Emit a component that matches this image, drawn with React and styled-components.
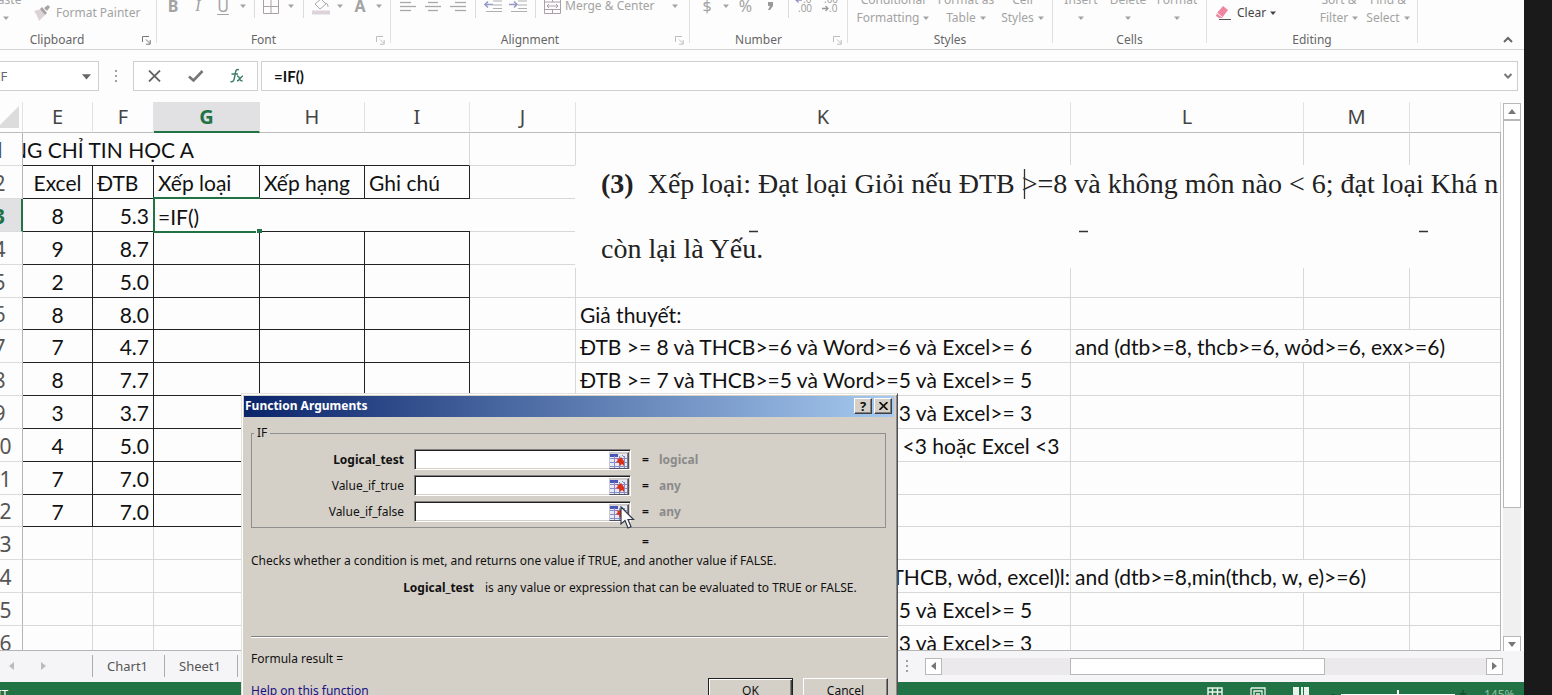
import React from "react";
import styled, { createGlobalStyle, css } from "styled-components";

const ui = '"Noto Sans", "Open Sans", sans-serif';
const cellFont = 'Lato, "Open Sans", sans-serif';

const Global = createGlobalStyle`
  *, *::before, *::after { box-sizing: border-box; }
  body { margin: 0; background: #1a1a1a; font-family: ${ui}; overflow: hidden; }
  button, input { font: inherit; color: inherit; margin: 0; padding: 0; border: 0; background: none; border-radius: 0; outline: none; }
  svg { display: block; flex: none; }
`;

const Screen = styled.div`
  display: flex;
  height: 100vh;
  overflow: hidden;
  padding-right: 28px;
  background: #1a1a1a;
`;

const Workbook = styled.main`
  position: relative;
  flex: 1;
  min-width: 0;
  display: flex;
  flex-direction: column;
  overflow: hidden;
  background: #fdfdfd;
`;

/* Ribbon */
const Ribbon = styled.div`
  display: flex;
  flex: none;
  height: 50px;
  overflow: hidden;
  border-bottom: 1px solid #d4d4d4;
  font-size: 12px;
  color: #a3a3a3;
`;

const GroupBox = styled.section`
  flex: none;
  width: ${(p) => p.$w}px;
  margin-left: ${(p) => (p.$cut ? -22 : 0)}px;
  height: 43px;
  display: flex;
  flex-direction: column;
  justify-content: flex-end;
  border-right: 1px solid #e0e0e0;
`;

const Tools = styled.div`
  display: flex;
  align-items: flex-end;
  flex: none;
  height: 54px;
  padding: 0 0 ${(p) => p.$bottom}px ${(p) => p.$left}px;
`;

const GroupFoot = styled.div`
  display: flex;
  align-items: center;
  flex: none;
  height: 18px;
  margin-bottom: -6px;
  color: #666;
`;

const GroupName = styled.span`
  flex: 1;
  text-align: center;
  line-height: 18px;
`;

const Launcher = styled.button`
  display: flex;
  width: 20px;
  justify-content: center;
  color: ${(p) => (p.$dim ? "#bdbdbd" : "#777")};
`;

const Tool = styled.button`
  display: flex;
  align-items: center;
  justify-content: ${(p) => (p.$start ? "flex-start" : "center")};
  gap: 4px;
  flex: none;
  width: ${(p) => p.$w}px;
  height: ${(p) => p.$h || 18}px;
  line-height: 18px;
  white-space: nowrap;
  color: ${(p) => (p.$dark ? "#444" : "inherit")};
  ${(p) => p.$spread && css`padding-right: 6px; & > svg:last-child { margin-left: auto; }`}
`;

const Glyph = styled.span`
  font-size: 16px;
  font-weight: ${(p) => (p.$bold ? 700 : 400)};
  font-style: ${(p) => (p.$italic ? "italic" : "normal")};
  font-family: ${(p) => (p.$italic ? '"Liberation Serif", serif' : ui)};
  text-decoration: ${(p) => (p.$under ? "underline" : "none")};
  text-underline-offset: 2px;
`;

const StackTool = styled.button`
  display: flex;
  flex-direction: column;
  align-items: center;
  flex: none;
  width: ${(p) => p.$w}px;
  line-height: 18px;
  white-space: nowrap;
`;

const StackLine = styled.span`
  display: flex;
  align-items: center;
  gap: 4px;
  height: 18px;
`;

const Divider = styled.span`
  flex: none;
  width: ${(p) => p.$w}px;
  height: 22px;
  margin-bottom: -3px;
  background: linear-gradient(#dcdcdc, #dcdcdc) center / 1px 100% no-repeat;
`;

const Collapse = styled.button`
  margin: 34px 10px 0 auto;
  width: 12px;
  height: 12px;
  color: #666;
`;

const Caret = ({ size = 6, color = "currentColor" }) => (
  <svg width={size} height={size} viewBox="0 0 6 6"><path d="M0 1.5h6L3 5z" fill={color} /></svg>
);

const LaunchIcon = () => (
  <svg width="9" height="9" viewBox="0 0 9 9" fill="none" stroke="currentColor">
    <path d="M.5 6V.5H7M4 3.500L8 7.500M8.200 4v4.200H4" />
  </svg>
);

const Group = ({ name, w, left = 4, bottom = 4, launcher, dim = true, cut, children }) => (
  <GroupBox $w={w} $cut={cut}>
    <Tools $left={left} $bottom={bottom}>{children}</Tools>
    <GroupFoot>
      <GroupName>{name}</GroupName>
      {launcher && <Launcher $dim={dim} aria-label={`${name} settings`}><LaunchIcon /></Launcher>}
    </GroupFoot>
  </GroupBox>
);

const Lines = ({ rows }) => (
  <svg width="16" height="14" viewBox="0 0 16 14" stroke="#a8a8a8" strokeWidth="1.300">
    {rows.map(([a, b], i) => <path key={i} d={`M${a} ${3.5 + i * 4}H${b}`} />)}
  </svg>
);

const IndentIcon = ({ left }) => (
  <svg width="18" height="14" viewBox="0 0 18 14" fill="none" stroke="#b0b0b0" strokeWidth="1.200">
    <path d="M9 2h9M9 6h9M9 9.500h9M2 12.500h16" />
    <path d={left ? "M9 5.500H1M4 2.500L1 5.500l3 3" : "M0 5.500h8M5 2.500l3 3-3 3"} stroke="#9a9ac8" strokeWidth="1.600" />
  </svg>
);

const DecimalIcon = ({ add }) => (
  <svg width="20" height="22" viewBox="0 0 20 22" fontSize="10" fill="#999" fontFamily="Open Sans" overflow="visible">
    <text x={add ? 9 : 4} y="8">{add ? ".0" : ".00"}</text>
    <text x={add ? 4 : 9} y="17">{add ? ".00" : ".0"}</text>
    <path d={add ? "M8 5H2M4.500 2.500L2 5l2.500 2.500" : "M2 13.500h6M5.500 11L8 13.500 5.500 16"} fill="none" stroke={add ? "#8f8fc4" : "#999"} strokeWidth="1.300" />
  </svg>
);

/* Formula bar */
const FormulaRow = styled.div`
  display: flex;
  flex: none;
  height: 52px;
  padding: 11px 6px 11px 0;
`;

const Box = styled.div`
  display: flex;
  align-items: center;
  border: 1px solid #cfcfcf;
  background: #fff;
`;

const NameBox = styled(Box)`
  width: 99px;
  border-left: 0;
  overflow: hidden;
  color: #666;
  font-size: 13px;
  input { width: 86px; margin-left: -4px; }
`;

const Grip = styled.span`
  width: ${(p) => p.$w}px;
  display: flex;
  align-items: center;
  justify-content: center;
`;

const FormulaButtons = styled(Box)`
  width: 125px;
  margin-right: 3px;
  button { width: 41px; display: flex; justify-content: center; }
`;

const FormulaBox = styled(Box)`
  flex: 1;
  padding: 0 4px 0 12px;
  font: 700 15px ${cellFont};
  color: #111;
  input { flex: 1; min-width: 0; }
  button { color: #777; }
`;

const Dots = () => (
  <svg width="3" height="14" viewBox="0 0 3 14" fill="#a0a0a0"><path d="M0 1h2v2H0zM0 6h2v2H0zM0 11h2v2H0z" /></svg>
);

/* Sheet */
const SheetArea = styled.div`
  display: flex;
  flex: 1;
  min-height: 0;
`;

const Viewport = styled.div`
  position: relative;
  flex: 1;
  min-width: 0;
  overflow: hidden;
  border-bottom: 1px solid #b5b5b5;
`;

const Grid = styled.table`
  width: calc(100% + 23px);
  margin-left: -23px;
  table-layout: fixed;
  border-collapse: separate;
  border-spacing: 0;
  font: 21px ${cellFont};
  color: #111;
`;

const ColHead = styled.th`
  height: 31px;
  padding: 0;
  font: ${(p) => (p.$on ? 700 : 400)} 20px/28px ${ui};
  color: ${(p) => (p.$on ? "#217346" : "#444")};
  background: ${(p) => (p.$on ? "#e1e1e3" : "transparent")};
  border-right: 1px solid #e2e2e2;
  border-bottom: ${(p) => (p.$on ? "2px solid #217346" : "1px solid #bcbcbc")};
  svg { margin: 0 3px 0 auto; }
`;

const RowHead = styled.th`
  height: ${(p) => (p.$r % 6 === 0 ? 32 : 33)}px;
  padding: 1px 0 0;
  font: ${(p) => (p.$on ? 700 : 400)} 21px/30px ${ui};
  color: ${(p) => (p.$on ? "#217346" : "#555")};
  background: ${(p) => (p.$on ? "#e1e1e3" : "transparent")};
  border-right: ${(p) => (p.$on ? "2px solid #217346" : "1px solid #b5b5b5")};
  border-bottom: 1px solid #dcdcdc;
`;

const Cell = styled.td`
  padding: 2px 4px 0;
  line-height: 28px;
  white-space: nowrap;
  overflow: hidden;
  text-align: ${(p) => p.$align || "left"};
  border-right: 1px solid #d8d8d8;
  border-bottom: 1px solid #d8d8d8;
  ${(p) => p.$inked && css`border-color: #222;`}
  ${(p) => p.$title && css`border-bottom-color: #222; text-indent: -16px;`}
  ${(p) => p.$flush && css`padding: 2px 0 0;`}
`;

const EditCell = styled.td`
  position: relative;
  padding: 2px 4px 0;
  border-bottom: 1px solid #222;
  input { display: block; width: 100%; height: 28px; }
  &::before {
    content: "";
    position: absolute;
    left: -1px;
    top: -2px;
    width: 107px;
    height: 36px;
    border: 2px solid #217346;
    border-right: 0;
    pointer-events: none;
  }
  &::after {
    content: "";
    position: absolute;
    left: 102px;
    bottom: -2px;
    width: 6px;
    height: 4px;
    background: #217346;
    border-left: 1px solid #fff;
  }
`;

const Snippet = styled.div`
  position: absolute;
  left: 575px;
  right: 1px;
  top: 63px;
  height: 103px;
  padding-left: 26px;
  overflow: hidden;
  background: #fdfdfd;
  font: 28px "Liberation Serif", serif;
  color: #222;
  p { margin: 0; line-height: 65px; height: 65px; white-space: pre; }
  p:first-child { margin-top: -14px; }
  svg { position: absolute; left: 0; top: 0; }
`;

const RightEdge = styled.div`
  position: absolute;
  right: 0;
  top: 30px;
  bottom: 0;
  width: 1px;
  background: #b5b5b5;
`;

const VScroll = styled.div`
  flex: none;
  display: flex;
  flex-direction: column;
  width: 18px;
  margin: 1px 3px -2px 2px;
  background: #f0f0f0;
`;

const ScrollButton = styled.button`
  display: flex;
  align-items: center;
  justify-content: center;
  flex: none;
  width: ${(p) => (p.$flat ? 17 : 18)}px;
  height: 17px;
  border: 1px solid #b8b8b8;
  background: #fff;
  color: #777;
`;

const VThumb = styled.div`
  flex: 0 1 388px;
  border: 1px solid #b8b8b8;
  background: #fff;
`;

const Spacer = styled.div`
  flex: ${(p) => p.$grow || 1};
`;

/* Tab strip and status bar */
const TabStrip = styled.div`
  display: flex;
  align-items: center;
  flex: none;
  height: 31px;
  padding: 0 21px 1px 0;
  background: #f5f5f7;
  font-size: 13px;
  color: #555;
`;

const TabNav = styled.nav`
  display: flex;
  gap: 24px;
  width: 92px;
  padding-left: 7px;
  color: #bbb;
  button { width: 8px; height: 22px; display: flex; align-items: center; justify-content: center; }
`;

const Tab = styled.button`
  width: ${(p) => p.$w}px;
  height: 22px;
  padding-right: 2px;
  border-left: 1px solid #ababab;
  line-height: 20px;
`;

const HScroll = styled.div`
  display: flex;
  width: 578px;
  height: 17px;
  background: #ebe9eb;
`;

const HThumb = styled.div`
  width: 255px;
  border: 1px solid #b8b8b8;
  background: #fff;
`;

const StatusBar = styled.footer`
  flex: none;
  height: 13px;
  overflow: hidden;
  background: #217346;
  color: #cfe3d7;
`;

const StatusItems = styled.div`
  display: flex;
  align-items: center;
  height: 24px;
  padding-right: 6px;
  font-size: 12px;
`;

const Mode = styled.span`
  margin: 0 auto 0 -18px;
  color: #fff;
`;

const Views = styled.div`
  display: flex;
  gap: 27px;
  margin-right: 19px;
`;

const ViewButton = styled.button`
  width: 16px;
`;

const ZoomSign = styled.button`
  width: 10px;
  line-height: 14px;
  font-size: 14px;
  font-weight: 700;
  color: #14502f;
`;

const ZoomRange = styled.input`
  appearance: none;
  width: 114px;
  height: 12px;
  margin: 0 3px;
  background: linear-gradient(#fff, #fff) center / 100% 1px no-repeat;
  &::-webkit-slider-thumb { appearance: none; width: 2px; height: 8px; background: #fff; }
`;

const ZoomValue = styled.span`
  width: 34px;
  margin-left: 16px;
  color: #8fc0a3;
`;

/* Function Arguments dialog */
const Dialog = styled.div`
  position: absolute;
  left: 241px;
  top: 393px;
  width: 657px;
  height: 320px;
  padding: 1px 1px 0 1px;
  background: #d4d0c8;
  border: 1px solid;
  border-color: #e4e2dc #505050 #505050 #e4e2dc;
  box-shadow: inset 1px 1px #fff, inset -1px -1px #8a8a8a;
  font-size: 12px;
  line-height: 16px;
  color: #111;
`;

const TitleBar = styled.header`
  display: flex;
  align-items: center;
  gap: 2px;
  height: 21px;
  margin: 1px 2px 0 1px;
  padding: 0 2px 1px 1px;
  background: linear-gradient(90deg, #0a246a, #a6caf0);
  h1 { flex: 1; margin: 0; font-size: 12px; line-height: 20px; color: #fff; }
`;

const raised = css`
  border: 1px solid;
  border-color: #fff #404040 #404040 #fff;
  box-shadow: inset -1px -1px #808080;
  background: #d4d0c8;
`;

const TitleButton = styled.button`
  ${raised}
  display: flex;
  align-items: center;
  justify-content: center;
  width: 18px;
  height: 16px;
  font-size: 13px;
  font-weight: 700;
  line-height: 13px;
`;

const DialogBody = styled.div`
  display: flex;
  flex-direction: column;
  padding: 9px 8px 0;
`;

const Fields = styled.fieldset`
  display: flex;
  flex-direction: column;
  gap: 5px;
  min-width: 0;
  height: 102px;
  margin: 0 2px 0 0;
  padding: 9px 0 0;
  border: 1px solid #8f8f8f;
  legend { margin-left: 2px; padding: 0 3px; line-height: 14px; }
`;

const FieldRow = styled.div`
  display: grid;
  grid-template-columns: 152px 217px 18px 1fr;
  column-gap: 10px;
  align-items: center;
  height: 21px;
  label { text-align: right; font-weight: ${(p) => (p.$bold ? 700 : 400)}; }
  output { margin-left: -10px; color: #8a8a8a; font-weight: 700; }
`;

const Equals = styled.span`
  padding-left: 1px;
  font-weight: 700;
`;

const RefField = styled.div`
  display: flex;
  height: 21px;
  background: #fff;
  border: 1px solid;
  border-color: #808080 #fff #fff #808080;
  box-shadow: inset 1px 1px #202020, inset -1px -1px #d4d0c8;
  padding: 2px 1px 1px 2px;
  input { flex: 1; min-width: 0; }
`;

const RefButton = styled.button`
  ${raised}
  border-color: #c8c8d0 #505060 #505060 #c8c8d0;
  width: 20px;
  height: 17px;
`;

const Total = styled.div`
  height: 16px;
  margin: 6px 0 0 391px;
  font-weight: 700;
`;

const Note = styled.p`
  margin: ${(p) => p.$top}px 0 0;
`;

const ArgHelp = styled.div`
  display: grid;
  grid-template-columns: 223px 1fr;
  column-gap: 11px;
  margin-top: 11px;
  white-space: nowrap;
  b { text-align: right; }
`;

const Rule = styled.hr`
  width: 100%;
  height: 2px;
  margin: 40px 0 0;
  border: 0;
  border-top: 1px solid #808080;
  background: #fff;
`;

const DialogFoot = styled.div`
  display: flex;
  align-items: flex-start;
  gap: 10px;
  margin-top: 11px;
  a { margin: 5px auto 0 0; color: #1a1080; text-decoration: none; border-bottom: 1px solid #1a1080; }
`;

const PushButton = styled.button`
  ${raised}
  width: 85px;
  height: 25px;
  ${(p) => p.$primary && css`border-color: #202020; box-shadow: inset 1px 1px #fff, inset -1px -1px #404040, inset -2px -2px #808080;`}
`;

const Pointer = styled.svg`
  position: absolute;
  left: 620px;
  top: 506px;
`;

const GridRefIcon = () => (
  <svg width="17" height="14" viewBox="0 0 17 14">
    <path d="M0 0h17v14H0z" fill="#e9e9f6" />
    <path d="M0 0h8v3H0z" fill="#4a55b8" />
    <path d="M0 4.500h17M0 8.500h17M0 12.500h17M4.500 2v12M9.500 2v12M14.500 2v12" stroke="#8a8cc8" fill="none" />
    <path d="M6 4l3 1 2-2 3 4v5l-2-2-2 2-1-3-3-1 2-2z" fill="#d8321c" />
    <path d="M12 1l3 3M8 12l2 2" stroke="#5a9aa8" />
  </svg>
);

const COLUMNS = [["E", 70], ["F", 61], ["G", 106], ["H", 105], ["I", 105], ["J", 106], ["K", 495], ["L", 233], ["M", 106], ["", null]];
const SCORES = { 3: ["8", "5.3"], 4: ["9", "8.7"], 5: ["2", "5.0"], 6: ["8", "8.0"], 7: ["7", "4.7"], 8: ["8", "7.7"], 9: ["3", "3.7"], 10: ["4", "5.0"], 11: ["7", "7.0"], 12: ["7", "7.0"] };
const HEADINGS = ["Excel", "ĐTB", "Xếp loại", "Xếp hạng", "Ghi chú"];
const rule = (a, b) => `ĐTB >= ${a} và THCB>=${b} và Word>=${b} và Excel>= ${b}`;
const NOTES = {
  6: "Giả thuyết:",
  7: rule(8, 6),
  8: rule(7, 5),
  9: rule(5, 3),
  10: "ĐTB <5 hoặc THCB <3 hoặc Word <3 hoặc Excel <3",
  14: "ĐTB >= 8 và min(THCB, wỏd, excel)l:",
  15: rule(7, 5),
  16: rule(5, 3),
};
const FORMULAS = {
  7: { span: 3, text: "and (dtb>=8, thcb>=6, wỏd>=6, exx>=6)" },
  14: { span: 2, text: "and (dtb>=8,min(thcb, w, e)>=6)" },
};

const LeftCells = ({ r }) => {
  if (r === 1) return <Cell $title colSpan={5}>NG CHỈ TIN HỌC A</Cell>;
  if (r === 2) return HEADINGS.map((h, i) => <Cell key={h} $inked $align={i === 0 ? "center" : "left"}>{h}</Cell>);
  const [excel, avg] = SCORES[r] || ["", ""];
  const inked = r <= 12;
  return (
    <>
      <Cell $inked={inked} $align="center">{excel}</Cell>
      <Cell $inked={inked} $align="right">{avg}</Cell>
      {r === 3
        ? <EditCell colSpan={3}><input aria-label="G3" defaultValue="=IF()" /></EditCell>
        : [0, 1, 2].map((i) => <Cell key={i} $inked={inked} />)}
    </>
  );
};

const RightCells = ({ r }) => {
  const f = FORMULAS[r] || { span: 1, text: "" };
  const flush = r === 14;
  return (
    <>
      <Cell />
      <Cell $flush={flush} $align={flush ? "right" : "left"}>{NOTES[r]}</Cell>
      <Cell colSpan={f.span}>{f.text}</Cell>
      {Array.from({ length: 3 - f.span }, (_, i) => <Cell key={i} />)}
    </>
  );
};

const Arguments = [
  ["Logical_test", "logical", true],
  ["Value_if_true", "any", false],
  ["Value_if_false", "any", false],
];

const FunctionDialog = () => (
  <Dialog role="dialog" aria-labelledby="dialog-title">
    <TitleBar>
      <h1 id="dialog-title">Function Arguments</h1>
      <TitleButton aria-label="Help">?</TitleButton>
      <TitleButton aria-label="Close">
        <svg width="9" height="8" viewBox="0 0 9 8" stroke="#111" strokeWidth="1.700"><path d="M.5 0l8 8M8.500 0l-8 8" /></svg>
      </TitleButton>
    </TitleBar>
    <DialogBody>
      <Fields>
        <legend>IF</legend>
        {Arguments.map(([name, type, bold]) => (
          <FieldRow key={name} $bold={bold}>
            <label htmlFor={name}>{name}</label>
            <RefField>
              <input id={name} />
              <RefButton aria-label={`Select range for ${name}`}><GridRefIcon /></RefButton>
            </RefField>
            <Equals>=</Equals>
            <output htmlFor={name}>{type}</output>
          </FieldRow>
        ))}
      </Fields>
      <Total>=</Total>
      <Note $top={3}>Checks whether a condition is met, and returns one value if TRUE, and another value if FALSE.</Note>
      <ArgHelp><b>Logical_test</b><span>is any value or expression that can be evaluated to TRUE or FALSE.</span></ArgHelp>
      <Rule />
      <Note $top={13}>Formula result =</Note>
      <DialogFoot>
        <a href="#help">Help on this function</a>
        <PushButton $primary>OK</PushButton>
        <PushButton>Cancel</PushButton>
      </DialogFoot>
    </DialogBody>
  </Dialog>
);

const RibbonBar = () => (
  <Ribbon>
    <Group name="Clipboard" w={179} left={6} cut launcher dim={false}>
      <StackTool $w={44}>
        <StackLine>Paste</StackLine>
        <StackLine><Caret /></StackLine>
      </StackTool>
      <Tool $w={115} $h={28} $start>
        <svg width="24" height="18" viewBox="-5 0 24 18">
          <path d="M1 7l7-2 4 6-6 6c-1-4-3-7-5-10z" fill="#dcd3d6" />
          <path d="M7 5l2-2 5 6-2 2zM11 4l4-3 2 2-3 4z" fill="#a9a3a8" />
        </svg>
        Format Painter
      </Tool>
    </Group>
    <Group name="Font" w={234} bottom={16} launcher>
      <Tool $w={24} aria-label="Bold"><Glyph $bold>B</Glyph></Tool>
      <Tool $w={26} aria-label="Italic"><Glyph $italic>I</Glyph></Tool>
      <Tool $w={24} aria-label="Underline"><Glyph $under>U</Glyph></Tool>
      <Tool $w={16} aria-label="Underline styles"><Caret /></Tool>
      <Divider $w={7} />
      <Tool $w={26} aria-label="Borders">
        <svg width="16" height="16" viewBox="0 0 16 16" fill="none" stroke="#aaa0a8"><path d="M.5.500h15v15H.5zM8 0v16M0 8.500h16" /></svg>
      </Tool>
      <Tool $w={14} aria-label="Border styles"><Caret /></Tool>
      <Divider $w={10} />
      <Tool $w={26} aria-label="Fill color">
        <svg width="18" height="18" viewBox="0 0 18 18" fill="none" stroke="#aaa">
          <path d="M3 7l6-5 5 5-6 5zM9 2V0M14 6c2 1 2 3 2 4" /><path d="M0 15.500h18" stroke="#ddd3da" strokeWidth="4" />
        </svg>
      </Tool>
      <Tool $w={12} aria-label="Fill colors"><Caret /></Tool>
      <Tool $w={28} aria-label="Font color"><Glyph $bold>A</Glyph></Tool>
      <Tool $w={10} aria-label="Font colors"><Caret /></Tool>
    </Group>
    <Group name="Alignment" w={299} bottom={16} launcher>
      <Tool $w={26} aria-label="Align left"><Lines rows={[[0, 11], [0, 16], [0, 11]]} /></Tool>
      <Tool $w={24} aria-label="Center"><Lines rows={[[3, 13], [0, 16], [3, 13]]} /></Tool>
      <Tool $w={26} aria-label="Align right"><Lines rows={[[5, 16], [0, 16], [5, 16]]} /></Tool>
      <Divider $w={9} />
      <Tool $w={26} aria-label="Decrease indent"><IndentIcon left /></Tool>
      <Tool $w={24} aria-label="Increase indent"><IndentIcon /></Tool>
      <Divider $w={11} />
      <Tool $w={143} $start $spread>
        <svg width="20" height="16" viewBox="0 0 20 16" fill="none" stroke="#aaa0a8"><path d="M3.500.500h16v15h-16zM3.500 4h16M3.500 11.500h16M11.500 0v4M11.500 11.500V16M6 8h11M8 6L6 8l2 2M15 6l2 2-2 2" /></svg>
        Merge &amp; Center
        <Caret />
      </Tool>
    </Group>
    <Group name="Number" w={158} bottom={16} launcher>
      <Tool $w={26} aria-label="Currency"><Glyph>$</Glyph></Tool>
      <Tool $w={12} aria-label="Currency formats"><Caret /></Tool>
      <Tool $w={27} aria-label="Percent"><Glyph>%</Glyph></Tool>
      <Tool $w={23} aria-label="Comma style">
        <svg width="5" height="9" viewBox="0 0 5 9"><path d="M0 0h5v4L2 8H0l2-4H0z" fill="#999" /></svg>
      </Tool>
      <Divider $w={12} />
      <Tool $w={20} aria-label="Increase decimal"><DecimalIcon add /></Tool>
      <Tool $w={32} aria-label="Decrease decimal"><DecimalIcon /></Tool>
    </Group>
    <Group name="Styles" w={205} left={2}>
      <StackTool $w={86}><StackLine>Conditional</StackLine><StackLine>Formatting<Caret /></StackLine></StackTool>
      <StackTool $w={60}><StackLine>Format as</StackLine><StackLine>Table<Caret /></StackLine></StackTool>
      <StackTool $w={53}><StackLine>Cell</StackLine><StackLine>Styles<Caret /></StackLine></StackTool>
    </Group>
    <Group name="Cells" w={154}>
      <StackTool $w={48}><StackLine>Insert</StackLine><StackLine><Caret /></StackLine></StackTool>
      <StackTool $w={46}><StackLine>Delete</StackLine><StackLine><Caret /></StackLine></StackTool>
      <StackTool $w={52}><StackLine>Format</StackLine><StackLine><Caret /></StackLine></StackTool>
    </Group>
    <Group name="Editing" w={211}>
      <Tool $w={103} $h={28} $start $dark>
        <svg width="22" height="16" viewBox="0 0 22 16">
          <path d="M6 8l6-7 5 4-6 8H8l-3-2z" fill="#ee86a0" /><path d="M6 8l5 4" stroke="#fff" /><path d="M8 14.500h12" stroke="#555" />
        </svg>
        Clear
        <Caret />
      </Tool>
      <StackTool $w={50}><StackLine>Sort &amp;</StackLine><StackLine>Filter<Caret /></StackLine></StackTool>
      <StackTool $w={48}><StackLine>Find &amp;</StackLine><StackLine>Select<Caret /></StackLine></StackTool>
    </Group>
    <Collapse aria-label="Collapse ribbon">
      <svg width="12" height="12" viewBox="0 0 12 12" fill="none" stroke="currentColor" strokeWidth="2"><path d="M2 8l4-4 4 4" /></svg>
    </Collapse>
  </Ribbon>
);

export default function App() {
  return (
    <>
      <Global />
      <Screen>
        <Workbook>
          <RibbonBar />
          <FormulaRow>
            <NameBox>
              <input aria-label="Name box" defaultValue="IF" />
              <button aria-label="Names"><Caret size={9} /></button>
            </NameBox>
            <Grip $w={34}><Dots /></Grip>
            <FormulaButtons>
              <button aria-label="Cancel entry"><svg width="13" height="12" viewBox="0 0 13 12" stroke="#666" strokeWidth="1.800"><path d="M1 .5l11 11M12 .5l-11 11" /></svg></button>
              <button aria-label="Enter"><svg width="16" height="12" viewBox="0 0 16 12" fill="none" stroke="#777" strokeWidth="2.600"><path d="M1 6.500l4.500 4L14.500 1" /></svg></button>
              <button aria-label="Insert function">
                <svg width="16" height="16" viewBox="0 0 16 16" fill="none" stroke="#3f7f66" strokeWidth="1.500"><path d="M10 2C7 0 6.500 4 6 7s-1 8-4.500 6.500M2.500 6H9" /><path d="M8 8c3-1 2 6 5.500 4.500M14 8c-2 0-3.500 5-6 5" /></svg>
              </button>
            </FormulaButtons>
            <FormulaBox>
              <input aria-label="Formula" defaultValue="=IF()" />
              <button aria-label="Expand formula bar"><svg width="10" height="10" viewBox="0 0 10 10" fill="none" stroke="currentColor" strokeWidth="2"><path d="M1.500 3L5 6.500 8.500 3" /></svg></button>
            </FormulaBox>
          </FormulaRow>
          <SheetArea>
            <Viewport>
              <Grid>
                <colgroup>
                  <col style={{ width: 46 }} />
                  {COLUMNS.map(([name, w]) => <col key={name} style={{ width: w || "auto" }} />)}
                </colgroup>
                <thead>
                  <tr>
                    <ColHead aria-label="Select all"><svg width="22" height="22" viewBox="0 0 22 22"><path d="M22 0v22H0z" fill="#dcdcdc" /></svg></ColHead>
                    {COLUMNS.map(([name]) => <ColHead key={name} $on={name === "G"}>{name}</ColHead>)}
                  </tr>
                </thead>
                <tbody>
                  {Array.from({ length: 16 }, (_, i) => i + 1).map((r) => (
                    <tr key={r}>
                      <RowHead $r={r} $on={r === 3}>{r}</RowHead>
                      <LeftCells r={r} />
                      <RightCells r={r} />
                    </tr>
                  ))}
                </tbody>
              </Grid>
              <Snippet>
                <p><b>(3)</b>{"  Xếp loại: Đạt loại Giỏi nếu ĐTB >=8 và không môn nào < 6; đạt loại Khá n"}</p>
                <p>còn lại là Yếu.</p>
                <svg width="926" height="103" viewBox="0 0 926 103" stroke="#333" fill="none">
                  <path d="M449.500 4v30" strokeWidth="1.300" />
                  <path d="M174 66.500h9M504 66.500h9M844 66.500h9" strokeWidth="1.300" />
                </svg>
              </Snippet>
              <RightEdge />
            </Viewport>
            <VScroll>
              <ScrollButton aria-label="Scroll up"><svg width="8" height="5" viewBox="0 0 8 5"><path d="M0 5h8L4 0z" fill="currentColor" /></svg></ScrollButton>
              <VThumb />
              <Spacer />
              <ScrollButton aria-label="Scroll down"><svg width="8" height="5" viewBox="0 0 8 5"><path d="M0 0h8L4 5z" fill="currentColor" /></svg></ScrollButton>
            </VScroll>
          </SheetArea>
          <TabStrip>
            <TabNav>
              <button aria-label="Previous sheet"><svg width="5" height="8" viewBox="0 0 5 8"><path d="M5 0v8L0 4z" fill="currentColor" /></svg></button>
              <button aria-label="Next sheet"><svg width="5" height="8" viewBox="0 0 5 8"><path d="M0 0v8l5-4z" fill="currentColor" /></svg></button>
            </TabNav>
            <Tab $w={72}>Chart1</Tab>
            <Tab $w={73}>Sheet1</Tab>
            <Tab $w={4} aria-label="More sheets" />
            <Spacer />
            <Grip $w={36}><Dots /></Grip>
            <HScroll>
              <ScrollButton $flat aria-label="Scroll left"><svg width="5" height="8" viewBox="0 0 5 8"><path d="M5 0v8L0 4z" fill="currentColor" /></svg></ScrollButton>
              <Spacer $grow={128} />
              <HThumb />
              <Spacer $grow={161} />
              <ScrollButton $flat aria-label="Scroll right"><svg width="5" height="8" viewBox="0 0 5 8"><path d="M0 0v8l5-4z" fill="currentColor" /></svg></ScrollButton>
            </HScroll>
          </TabStrip>
          <StatusBar>
            <StatusItems>
              <Mode>EDIT</Mode>
              <Views>
                <ViewButton aria-label="Normal view"><svg width="16" height="14" viewBox="0 0 16 14" fill="none" stroke="#e8f3ec" strokeWidth="1.500"><path d="M1 1h14v12H1zM1 5h14M1 9h14M5.500 1v12M10.500 1v12" /></svg></ViewButton>
                <ViewButton aria-label="Page layout"><svg width="16" height="14" viewBox="0 0 16 14" fill="none" stroke="#e8f3ec" strokeWidth="1.300"><path d="M1 1h14v14M1 1v14M4 14V4h8v10M6 7h4M6 9.500h4" /></svg></ViewButton>
                <ViewButton aria-label="Page break preview"><svg width="16" height="14" viewBox="0 0 16 14" fill="#e8f3ec"><path d="M0 0h6v14H0zM8 0h2v10H8zM11 0h5v14h-5z" /></svg></ViewButton>
              </Views>
              <ZoomSign aria-label="Zoom out">-</ZoomSign>
              <ZoomRange type="range" aria-label="Zoom" min="0" max="100" defaultValue="50" />
              <ZoomSign aria-label="Zoom in">+</ZoomSign>
              <ZoomValue>145%</ZoomValue>
            </StatusItems>
          </StatusBar>
          <FunctionDialog />
          <Pointer width="15" height="24" viewBox="0 0 15 24"><path d="M1 1v17l4-3.500 3 7.500 3-1.300-3-7.200h5.500z" fill="#fff" stroke="#333a4a" strokeWidth="1.200" /></Pointer>
        </Workbook>
      </Screen>
    </>
  );
}
